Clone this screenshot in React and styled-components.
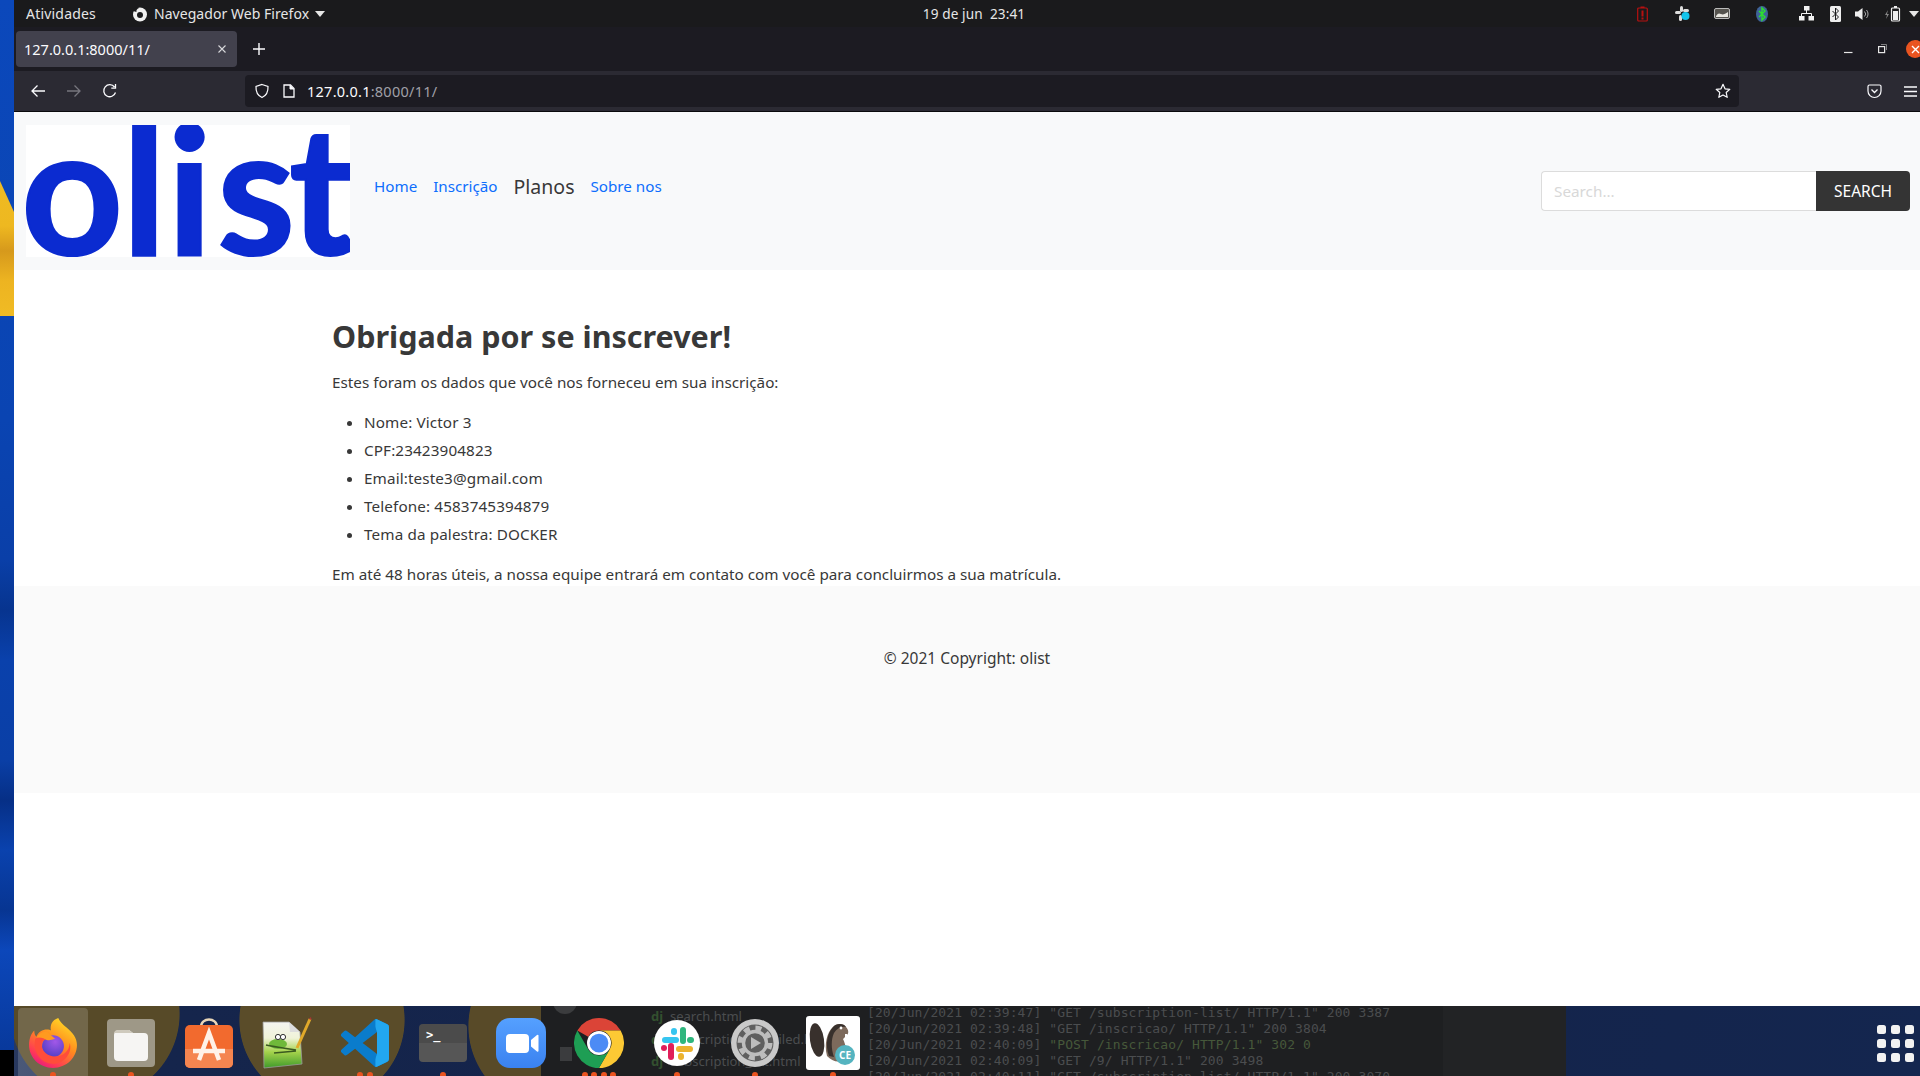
import React from "react";
import styled, { createGlobalStyle } from "styled-components";

const UI = `"Noto Sans", "Open Sans", "Liberation Sans", sans-serif`;

const Global = createGlobalStyle`
  html, body { margin: 0; padding: 0; height: 1076px; overflow: hidden; background: #000; }
  * { box-sizing: border-box; }
  #root { height: 1076px; }
`;

const Desktop = styled.div`
  display: flex; width: 1920px; height: 1076px; overflow: hidden; background: #000;
  font-family: ${UI};
`;
const Wallpaper = styled.div`
  width: 14px; height: 1050px; flex: none;
  background: linear-gradient(to bottom, #0b48bb 0, #0a44b2 420px, #0a3fa8 560px, #07348f 610px, #0a41ac 660px, #0a3fa6 760px, #062f86 800px, #0a42ae 850px, #073592 910px, #0c47ba 950px, #08399c 1050px);
`;
const WallpaperGold = styled.div`
  width: 14px; height: 135px; margin-top: 181px;
  clip-path: polygon(0 0, 100% 31px, 100% 100%, 0 100%);
  background: linear-gradient(to bottom, #efbb22 0, #eeb820 45px, #d6991c 70px, #edb421 100px, #f0bb24 135px);
`;
const Screen = styled.div`
  flex: 1; min-width: 0; display: flex; flex-direction: column; height: 1076px;
`;

/* top system bar */
const TopBar = styled.div`
  height: 27px; flex: none; background: #1a1a1c; color: #e6e6e6; font-size: 14px;
  display: grid; grid-template-columns: 1fr auto 1fr; align-items: center; padding: 0 0 0 12px;
`;
const TopLeft = styled.div`display: flex; align-items: center;`;
const Activities = styled.span`width: 106px; letter-spacing: .2px;`;
const AppMenu = styled.span`display: flex; align-items: center; gap: 6px; letter-spacing: .05px;`;
const Clock = styled.span`font-size: 13.6px; letter-spacing: .1px; padding-left: 2px;`;
const Tray = styled.div`display: flex; justify-content: flex-end; align-items: center;`;
const TraySlot = styled.span`
  display: flex; justify-content: center; align-items: center; width: ${p => p.$w}px; height: 27px;
`;

/* browser tabs */
const TabStrip = styled.div`
  height: 44px; flex: none; background: #1c1b22; display: flex; align-items: center; padding-left: 2px;
`;
const Tab = styled.div`
  width: 221px; height: 36px; border-radius: 4px; background: #42414d; color: #fbfbfe;
  display: flex; align-items: center; justify-content: space-between; padding: 0 10px 0 8px;
  font-size: 14.5px;
`;
const NewTab = styled.span`display: flex; margin-left: 16px;`;
const WindowButtons = styled.div`
  margin-left: auto; display: flex; align-items: center; gap: 25px; width: 76px; overflow: hidden; height: 24px;
  & > * { flex: none; }
`;
const CloseDot = styled.span`
  width: 18px; height: 18px; border-radius: 50%; background: #e95420; margin-left: -6px;
  display: flex; align-items: center; justify-content: center;
`;

/* browser toolbar */
const Toolbar = styled.div`
  height: 41px; flex: none; background: #2b2a33; border-bottom: 1px solid #0a0a0c;
  display: flex; align-items: flex-start; padding-top: 4px;
`;
const NavButtons = styled.div`
  width: 231px; display: flex; align-items: center; height: 32px; gap: 20px; padding-left: 16px;
`;
const UrlBar = styled.div`
  width: 1494px; height: 32px; background: #1c1b22; border-radius: 4px; flex: none;
  display: flex; align-items: center; padding: 0 8px 0 9px; color: #fbfbfe; font-size: 14.5px; letter-spacing: .25px;
`;
const UrlIcons = styled.span`display: flex; align-items: center; gap: 12px; margin-right: 11px;`;
const UrlHost = styled.span``;
const UrlPath = styled.span`color: #a0a0a8;`;
const UrlStar = styled.span`display: flex; margin-left: auto;`;
const ToolEnd = styled.div`
  flex: 1; display: flex; align-items: center; justify-content: flex-end; height: 32px; gap: 22px; padding-right: 3px;
`;

/* page */
const Page = styled.div`
  flex: 1; min-height: 0; background: #fff; color: #383838; display: flex; flex-direction: column;
  font-family: ${UI}; font-size: 16px; line-height: 24px;
`;
const Navbar = styled.nav`
  height: 158px; flex: none; background: #f8f9fa; display: flex; align-items: flex-start; padding: 13px 10px 13px 12px;
`;
const Logo = styled.svg`display: block; width: 324px; height: 132px; flex: none;`;
const LogoText = styled.text`
  font-family: "Lato", "Open Sans", sans-serif; font-weight: 700; fill: #0b2bd0;
  stroke: #0b2bd0; stroke-width: 2px;
`;
const NavLinks = styled.ul`
  list-style: none; display: flex; align-items: center; margin: 48.5px 0 0 16px; padding: 0;
`;
const NavItem = styled.li`
  padding: 0 8px; white-space: nowrap;
  color: ${p => (p.$current ? "#383838" : "#0d6efd")};
  font-size: ${p => (p.$current ? "19.5px" : "15.2px")};
  position: relative; top: ${p => (p.$current ? "1px" : "0")};
`;
const SearchForm = styled.form`display: flex; margin: 46px 0 0 auto; height: 40px;`;
const SearchInput = styled.input`
  width: 275px; height: 40px; border: 1px solid #dcdcdc; border-right: 0; border-radius: 4px 0 0 4px;
  background: #fff; padding: 0 12px; font: 15.3px ${UI}; outline: none;
  &::placeholder { color: #d8d8d8; opacity: 1; }
`;
const SearchButton = styled.button`
  width: 94px; height: 40px; border: 0; border-radius: 0 4px 4px 0; background: #343434; color: #fff;
  font: 15.5px ${UI}; padding: 0;
`;
const Content = styled.main`padding: 47px 0 0 318px; font-size: 15.25px;`;
const Title = styled.h1`
  font-size: 30.5px; line-height: 38px; font-weight: 700; color: #383838; margin: 0 0 15px;
`;
const Para = styled.p`margin: 14px 0;`;
const Details = styled.ul`margin: 0; padding-left: 32px; list-style: disc;`;
const Detail = styled.li`line-height: 28px; letter-spacing: .12px;`;
const Footer = styled.footer`
  height: 207px; flex: none; background: #fafafa; margin-top: -14px; text-align: center;
  padding-top: 60px; font-size: 15.5px;
`;

/* dock */
const Dock = styled.div`
  position: relative; height: 70px; flex: none; overflow: hidden; display: flex;
  background:
    linear-gradient(to right, transparent 527px, #1e1f21 527px, #1e1f21 1429px, #222325 1429px, #222325 1552px, transparent 1552px),
    radial-gradient(circle 85px at 81px 8px, #574a28 99%, transparent 100%),
    radial-gradient(circle 83px at 308px 14px, #5a4c29 99%, transparent 100%),
    radial-gradient(circle 85px at 539px 20px, #584a28 99%, transparent 100%),
    linear-gradient(100deg, #2a3a60 0, #15254c 8%, #142349 60%, #14264f 100%);
`;
const Behind = styled.div`position: absolute; inset: 0; pointer-events: none;`;
const LogLines = styled.pre`
  position: absolute; left: 853px; top: -1px; margin: 0;
  font: 13px/16px "DejaVu Sans Mono", monospace; letter-spacing: .1px; color: #4b4d4f;
`;
const LogLine = styled.div``;
const PostSpan = styled.span`color: #46583a;`;
const FileList = styled.div`
  position: absolute; left: 637px; top: -1px; font: 13px/22.5px ${UI}; color: #4b4d4f; white-space: nowrap;
`;
const FileRow = styled.div`display: flex; gap: 6px;`;
const Dj = styled.span`color: #33502f; font-weight: 700; width: 13px;`;
const GhostCircle = styled.span`
  position: absolute; left: 539px; top: -16px; width: 24px; height: 24px; border-radius: 50%; background: #3b3c3e;
`;
const GhostIcon = styled.span`
  position: absolute; left: 546px; top: 41px; width: 12px; height: 14px; background: #3b3c3e;
`;
const Launcher = styled.div`position: relative; display: flex;`;
const Cell = styled.div`
  width: 78px; height: 70px; display: flex; flex-direction: column; align-items: center; position: relative;
`;
const Slot = styled.div`
  width: 70px; height: 68px; margin-top: 2px; padding-top: 2px; display: flex; align-items: center; justify-content: center;
  border-radius: 4px 4px 0 0;
  background: ${p => (p.$active ? "rgba(255,255,255,.16)" : "transparent")};
`;
const Pips = styled.div`position: absolute; bottom: -2px; display: flex; gap: 3.5px;`;
const Pip = styled.span`width: 6px; height: 6px; border-radius: 50%; background: #e95420;`;
const AppGrid = styled.div`
  position: absolute; right: 6px; top: 19px; display: grid; grid-template-columns: repeat(3, 9px); gap: 5px 5px;
`;
const AppDot = styled.span`width: 9px; height: 9px; border-radius: 2.5px; background: #f2f2f2;`;
const TerminalTile = styled.div`
  width: 48px; height: 38px; border-radius: 4px; overflow: hidden;
  background: linear-gradient(to bottom, #4b4b4b 0, #4b4b4b 50%, #565656 50%, #565656 100%);
  color: #fff; font: 700 12px/14px "DejaVu Sans Mono", monospace; padding: 4px 0 0 7px;
`;
const BeaverTile = styled.div`
  width: 54px; height: 54px; border-radius: 3px; background: #fff; position: relative;
`;
const CeBadge = styled.span`
  position: absolute; right: 5px; bottom: 5px; width: 20px; height: 20px; border-radius: 50%;
  background: #55b4c0; color: #fff; font: 700 10px/20px ${UI}; text-align: center;
`;

const Svg = ({ s = 16, w, h, vb, children }) => (
  <svg width={w || s} height={h || s} viewBox={vb || `0 0 ${w || s} ${h || s}`} fill="none" style={{ display: "block" }}>
    {children}
  </svg>
);
const Caret = () => <Svg w={10} h={6}><path d="M0 0h10L5 6z" fill="#e6e6e6" /></Svg>;
const FoxMono = () => (
  <Svg s={16}>
    <circle cx="8" cy="8.500" r="7" fill="#f0f0f0" />
    <circle cx="8" cy="9" r="3" fill="#1a1a1c" />
    <path d="M1 5C3 1 6 .5 7 2 5 3 4 4 4.500 6z" fill="#1a1a1c" />
  </Svg>
);

const TrayIcons = () => (
  <Tray>
    <TraySlot $w={28}>
      <Svg w={11} h={16}><rect x=".7" y="2" width="9.6" height="13" rx="1" stroke="#b81010" strokeWidth="1.2" /><rect x="3.5" y=".5" width="4" height="1.5" fill="#b81010" /><rect x="4.5" y="4.5" width="2" height="6" fill="#b81010" /><rect x="4.5" y="11.5" width="2" height="2" fill="#b81010" /></Svg>
    </TraySlot>
    <TraySlot $w={52}>
      <Svg s={15}><rect x="5" y="0" width="3" height="6" rx="1.5" fill="#ddd" /><rect x="0" y="5" width="6" height="3" rx="1.5" fill="#ddd" /><rect x="8" y="3" width="6" height="3" rx="1.5" fill="#ddd" /><rect x="4" y="9" width="3" height="6" rx="1.5" fill="#ddd" /><circle cx="10.5" cy="10" r="4" fill="#12c4ec" /></Svg>
    </TraySlot>
    <TraySlot $w={28}>
      <Svg w={16} h={11}><rect x=".5" y=".5" width="15" height="10" rx="1.5" fill="#55534e" stroke="#bbb" /><path d="M2 8c2-3 3-3 5-2s4 0 7-2v5H2z" fill="#e8e6e0" /></Svg>
    </TraySlot>
    <TraySlot $w={52}>
      <Svg w={12} h={16}><ellipse cx="6" cy="8" rx="6" ry="8" fill="#3f6398" /><path d="M3 5l6 6-3 3V2l3 3-6 6" stroke="#2de02d" strokeWidth="1.4" /></Svg>
    </TraySlot>
    <TraySlot $w={36}>
      <Svg s={15}><rect x="5" y="0" width="5.5" height="4.5" fill="#f2f2f2" /><rect x="0" y="10" width="5.5" height="4.5" fill="#f2f2f2" /><rect x="9.5" y="10" width="5.5" height="4.5" fill="#f2f2f2" /><path d="M7.500 4v3.500M2.500 10V7.500h10V10" stroke="#f2f2f2" /></Svg>
    </TraySlot>
    <TraySlot $w={22}>
      <Svg w={11} h={16}><rect width="11" height="16" rx="1.5" fill="#eee" /><path d="M2.500 5l6 6-3 3V2l3 3-6 6" stroke="#1a1a1c" strokeWidth="1" /></Svg>
    </TraySlot>
    <TraySlot $w={32}>
      <Svg w={15} h={14}><path d="M0 4.500h3L7.500 1v12L3 9.500H0z" fill="#eee" /><path d="M9.500 4.500a3.500 3.500 0 0 1 0 5M11.500 3a6 6 0 0 1 0 8" stroke="#aaa" strokeWidth="1" /></Svg>
    </TraySlot>
    <TraySlot $w={30}>
      <Svg w={16} h={16}><path d="M3 4L0 9h2l-1 4 3-5H2z" fill="#888" /><rect x="6.500" y="2" width="8" height="13" rx="1" stroke="#eee" strokeWidth="1.2" /><rect x="9" y="0" width="3" height="2" fill="#eee" /><rect x="8" y="5" width="5" height="9" fill="#eee" /></Svg>
    </TraySlot>
    <TraySlot $w={12}><Caret /></TraySlot>
  </Tray>
);

const FirefoxIcon = () => (
  <Svg s={50} vb="0 0 48 48">
    <defs>
      <linearGradient id="ffa" x1="0.8" y1="0" x2="0.2" y2="1"><stop offset="0" stopColor="#ffe226" /><stop offset=".45" stopColor="#ff8a1f" /><stop offset=".8" stopColor="#ff3a55" /><stop offset="1" stopColor="#e31587" /></linearGradient>
      <radialGradient id="ffb" cx=".6" cy=".3" r=".8"><stop offset="0" stopColor="#a258e8" /><stop offset="1" stopColor="#4a3cc0" /></radialGradient>
    </defs>
    <path d="M29 0c2 4 4 6 8 9 6 5 10 10 10 17 0 12-10 22-23 22C11 48 1 38 1 26c0-6 2-11 5-14 0 3 1 5 2 6 2-5 6-7 10-7 2 0 3 0 4 1-1-5 1-10 7-12z" fill="url(#ffa)" />
    <circle cx="24" cy="27" r="10.5" fill="url(#ffb)" />
    <path d="M7 20c5-3 9-2 12 0-4 1-6 3-6 6 0 6 6 11 13 11 8 0 14-6 14-13 3 9-5 20-16 20C13 44 4 33 7 20z" fill="#ff4d3a" />
    <path d="M8 19c3-5 8-7 11-5l7 6c-3 1-6 2-8 1s-6-3-10-2z" fill="#ff9a1f" />
  </Svg>
);
const FilesIcon = () => (
  <Svg s={48}>
    <rect width="48" height="48" rx="4" fill="#9e9887" />
    <path d="M7 16a5 5 0 0 1 5-5h10l4 3h11a4 4 0 0 1 4 4v20a4 4 0 0 1-4 4H11a4 4 0 0 1-4-4z" fill="#f6f5f3" />
    <path d="M7 14a4 4 0 0 1 4-3h11l4 3z" fill="#cfcabd" />
  </Svg>
);
const SoftwareIcon = () => (
  <Svg w={48} h={50}>
    <path d="M16 9c0-10 16-10 16 0" stroke="#e9d6b8" strokeWidth="2.4" />
    <rect y="7" width="48" height="43" rx="5" fill="#f26a2e" />
    <path d="M0 31h48v14a5 5 0 0 1-5 5H5a5 5 0 0 1-5-5z" fill="#f58550" />
    <path d="M14 42L24 15l10 27M8 33h32" stroke="#fff2e8" strokeWidth="4.5" />
  </Svg>
);
const NotepadIcon = () => (
  <Svg w={50} h={52}>
    <defs><linearGradient id="npp" x1="0" y1="0" x2="0" y2="1"><stop offset="0" stopColor="#f4f4f0" /><stop offset=".35" stopColor="#f0f3d8" /><stop offset=".65" stopColor="#a5d34c" /><stop offset="1" stopColor="#3f9a2a" /></linearGradient></defs>
    <path d="M1 5h26l11 10 2 32-38 4z" fill="url(#npp)" stroke="#9a9a9a" strokeWidth=".8" />
    <path d="M27 5l1 10h10z" fill="#ddd" />
    <ellipse cx="16" cy="27" rx="9" ry="5" fill="#6fb93a" />
    <circle cx="16" cy="20" r="2.6" fill="#fff" stroke="#333" /><circle cx="21" cy="20" r="2.6" fill="#fff" stroke="#333" />
    <path d="M4 28c8 2 14 2 30 5M12 36l22-2" stroke="#3a5a20" strokeWidth="1.4" />
    <path d="M35 31L48 2" stroke="#e0a92a" strokeWidth="3" />
    <path d="M46.500 2L49 0l.5 3z" fill="#a33" />
  </Svg>
);
const VsCodeIcon = () => (
  <Svg s={48} vb="0 0 24 24">
    <defs><clipPath id="vsr"><rect x="17.2" y="0" width="7" height="24" /></clipPath></defs>
    <path d="M23.15 2.587L18.21.21a1.494 1.494 0 0 0-1.705.29l-9.46 8.63-4.12-3.128a.999.999 0 0 0-1.276.057L.327 7.261A1 1 0 0 0 .326 8.74L3.899 12 .326 15.26a1 1 0 0 0 .001 1.479L1.65 17.94a.999.999 0 0 0 1.276.057l4.12-3.128 9.46 8.63a1.492 1.492 0 0 0 1.704.29l4.942-2.377A1.5 1.5 0 0 0 24 20.06V3.939a1.5 1.5 0 0 0-.85-1.352zm-5.146 14.861L10.826 12l7.178-5.448v10.896z" fill="#0a7ccc" />
    <path d="M23.15 2.587L18.21.21a1.494 1.494 0 0 0-1.705.29L16 1 18 6.500v11L16 23l.5.5a1.492 1.492 0 0 0 1.704.29l4.942-2.377A1.500 1.500 0 0 0 24 20.06V3.939a1.500 1.500 0 0 0-.85-1.352z" fill="#22a7f0" clipPath="url(#vsr)" />
  </Svg>
);
const ZoomIcon = () => (
  <Svg s={50}>
    <defs><linearGradient id="zm" x1="0" y1="0" x2="0" y2="1"><stop offset="0" stopColor="#55a0ff" /><stop offset="1" stopColor="#3a82f0" /></linearGradient></defs>
    <rect width="50" height="50" rx="14" fill="url(#zm)" />
    <rect x="10" y="16" width="23" height="19" rx="4" fill="#fff" />
    <path d="M35 22l6-5a1 1 0 0 1 1.500.8v15a1 1 0 0 1-1.500.8l-6-5z" fill="#fff" />
  </Svg>
);
const ChromeIcon = () => (
  <Svg s={50} vb="0 0 48 48">
    <path d="M24 0A24 24 0 0 1 44.800 12H24A12 12 0 0 0 13.600 18L3.200 12A24 24 0 0 1 24 0Z" fill="#db4437" />
    <path d="M44.800 12A24 24 0 0 1 24 48L34.400 30A12 12 0 0 0 24 12Z" fill="#fcc934" />
    <path d="M3.200 12A24 24 0 0 0 24 48L34.400 30A12 12 0 0 1 13.600 30L3.200 12Z" fill="#1e9e54" />
    <circle cx="24" cy="24" r="11.5" fill="#fff" />
    <circle cx="24" cy="24" r="9" fill="#4c8bf5" />
  </Svg>
);
const SlackIcon = () => (
  <Svg s={46}>
    <circle cx="23" cy="23" r="23" fill="#fff" />
    <rect x="8" y="17" width="17" height="6" rx="3" fill="#36c5f0" /><rect x="17" y="8" width="6" height="7" rx="3" fill="#36c5f0" />
    <rect x="26" y="7" width="6" height="17" rx="3" fill="#2eb67d" /><rect x="33" y="17" width="7" height="6" rx="3" fill="#2eb67d" />
    <rect x="22" y="26" width="17" height="6" rx="3" fill="#ecb22e" /><rect x="24" y="33" width="6" height="7" rx="3" fill="#ecb22e" />
    <rect x="14" y="23" width="6" height="17" rx="3" fill="#e01e5a" /><rect x="7" y="25" width="6" height="6" rx="3" fill="#e01e5a" />
  </Svg>
);
const SettingsIcon = () => (
  <Svg s={48}>
    <circle cx="24" cy="24" r="24" fill="#c9c9c9" />
    <circle cx="24" cy="24" r="18.5" fill="#5f5f5f" />
    <circle cx="24" cy="24" r="15" stroke="#bdbdbd" strokeWidth="5" strokeDasharray="6 5.78" />
    <circle cx="24" cy="24" r="11.5" stroke="#bdbdbd" strokeWidth="3.4" />
    <path d="M20 18l10 6-10 6z" fill="#bdbdbd" />
  </Svg>
);
const BeaverIcon = () => (
  <BeaverTile>
    <Svg s={54}>
      <ellipse cx="11" cy="24" rx="7" ry="17" fill="#38302c" transform="rotate(-8 11 24)" />
      <path d="M21 40C18 28 21 16 27 11c3-4 11-4 13 0 3 3 3 7 0 9l-3 3c3 6 4 13 2 20-6 5-13 2-18-3z" fill="#7d6a5c" />
      <path d="M27 11c3-4 11-4 13 0-4-1-9 1-12 6-3 6-3 16 0 24l-5-1c-4-11-2-22 4-29z" fill="#38302c" />
      <circle cx="35" cy="12" r="1.4" fill="#fff" />
      <rect x="39" y="18" width="2.4" height="4.5" fill="#fff" />
    </Svg>
    <CeBadge>CE</CeBadge>
  </BeaverTile>
);

const apps = [
  { key: "ff", pips: 1, active: true, icon: <FirefoxIcon /> },
  { key: "files", pips: 1, icon: <FilesIcon /> },
  { key: "sw", pips: 0, icon: <SoftwareIcon /> },
  { key: "npp", pips: 0, icon: <NotepadIcon /> },
  { key: "vs", pips: 2, icon: <VsCodeIcon /> },
  { key: "term", pips: 1, icon: <TerminalTile>&gt;_</TerminalTile> },
  { key: "zoom", pips: 0, icon: <ZoomIcon /> },
  { key: "chrome", pips: 4, icon: <ChromeIcon /> },
  { key: "slack", pips: 1, icon: <SlackIcon /> },
  { key: "cfg", pips: 1, icon: <SettingsIcon /> },
  { key: "beaver", pips: 1, icon: <BeaverIcon /> },
];

const logs = [
  ['[20/Jun/2021 02:39:47] "GET /subscription-list/ HTTP/1.1" 200 3387'],
  ['[20/Jun/2021 02:39:48] "GET /inscricao/ HTTP/1.1" 200 3804'],
  ['[20/Jun/2021 02:40:09] ', '"POST /inscricao/ HTTP/1.1" 302 0'],
  ['[20/Jun/2021 02:40:09] "GET /9/ HTTP/1.1" 200 3498'],
  ['[20/Jun/2021 02:40:11] "GET /subscription-list/ HTTP/1.1" 200 3070'],
];

export default function App() {
  return (
    <>
      <Global />
      <Desktop>
        <Wallpaper><WallpaperGold /></Wallpaper>
        <Screen>
          <TopBar>
            <TopLeft>
              <Activities>Atividades</Activities>
              <AppMenu><FoxMono />Navegador Web Firefox <Caret /></AppMenu>
            </TopLeft>
            <Clock>19 de jun&nbsp;&nbsp;23:41</Clock>
            <TrayIcons />
          </TopBar>

          <TabStrip>
            <Tab>
              <span>127.0.0.1:8000/11/</span>
              <Svg s={10}><path d="M1.500 1.500l7 7M8.500 1.500l-7 7" stroke="#d8d8dc" strokeWidth="1.1" /></Svg>
            </Tab>
            <NewTab><Svg s={12}><path d="M6 0v12M0 6h12" stroke="#fbfbfe" strokeWidth="1.4" /></Svg></NewTab>
            <WindowButtons>
              <Svg w={9} h={10}><path d="M0 8.500h8.500" stroke="#e6e6e6" strokeWidth="1.2" /></Svg>
              <Svg w={9} h={10}><rect x=".6" y="2.600" width="6" height="6" stroke="#e6e6e6" strokeWidth="1.2" /><path d="M3 .5h5.500v5.500" stroke="#999" strokeWidth=".8" /></Svg>
              <CloseDot><Svg s={9}><path d="M1 1l7 7M8 1l-7 7" stroke="#fff" strokeWidth="1.4" /></Svg></CloseDot>
            </WindowButtons>
          </TabStrip>

          <Toolbar>
            <NavButtons>
              <Svg s={16}><path d="M15 8H2M7.500 2.500L2 8l5.500 5.500" stroke="#fbfbfe" strokeWidth="1.3" /></Svg>
              <Svg s={16}><path d="M1 8h13M8.500 2.500L14 8l-5.500 5.500" stroke="#77767e" strokeWidth="1.3" /></Svg>
              <Svg s={16}><path d="M13.500 9.500A6 6 0 1 1 12.500 4M13.500 1v4.200H9.300" stroke="#fbfbfe" strokeWidth="1.3" /></Svg>
            </NavButtons>
            <UrlBar>
              <UrlIcons>
                <Svg s={16}><path d="M8 1.500l6 2c.3 5.500-1.500 9-6 11-4.500-2-6.300-5.500-6-11z" stroke="#fbfbfe" strokeWidth="1.2" /></Svg>
                <Svg s={14}><path d="M2 1h6.500L12 4.500V13H2z" stroke="#fbfbfe" strokeWidth="1.3" fill="#1c1b22" /><path d="M8 1v4h4" fill="#fbfbfe" stroke="#fbfbfe" /></Svg>
              </UrlIcons>
              <UrlHost>127.0.0.1</UrlHost><UrlPath>:8000/11/</UrlPath>
              <UrlStar>
                <Svg s={16}><path d="M8 1.300l2 4.500 4.800.5-3.600 3.200 1 4.800L8 11.900l-4.200 2.400 1-4.800L1.200 6.300 6 5.800z" stroke="#fbfbfe" strokeWidth="1.2" strokeLinejoin="round" /></Svg>
              </UrlStar>
            </UrlBar>
            <ToolEnd>
              <Svg s={15}><path d="M1 2.500a1.500 1.500 0 0 1 1.500-1.500h10A1.500 1.500 0 0 1 14 2.500V7a6.500 6.500 0 0 1-13 0z" stroke="#fbfbfe" strokeWidth="1.2" /><path d="M4.500 5.500l3 3 3-3" stroke="#fbfbfe" strokeWidth="1.3" /></Svg>
              <Svg s={13}><path d="M0 2h13M0 6.500h13M0 11h13" stroke="#fbfbfe" strokeWidth="1.3" /></Svg>
            </ToolEnd>
          </Toolbar>

          <Page>
            <Navbar>
              <Logo viewBox="0 0 324 132">
                <rect width="324" height="132" fill="#fff" />
                <LogoText y="130" fontSize="178" x="-5 96 141 191 263">olist</LogoText>
              </Logo>
              <NavLinks>
                <NavItem>Home</NavItem>
                <NavItem>Inscrição</NavItem>
                <NavItem $current>Planos</NavItem>
                <NavItem>Sobre nos</NavItem>
              </NavLinks>
              <SearchForm onSubmit={e => e.preventDefault()}>
                <SearchInput placeholder="Search..." readOnly />
                <SearchButton type="button">SEARCH</SearchButton>
              </SearchForm>
            </Navbar>
            <Content>
              <Title>Obrigada por se inscrever!</Title>
              <Para>Estes foram os dados que você nos forneceu em sua inscrição:</Para>
              <Details>
                <Detail>Nome: Victor 3</Detail>
                <Detail>CPF:23423904823</Detail>
                <Detail>Email:teste3@gmail.com</Detail>
                <Detail>Telefone: 4583745394879</Detail>
                <Detail>Tema da palestra: DOCKER</Detail>
              </Details>
              <Para>Em até 48 horas úteis, a nossa equipe entrará em contato com você para concluirmos a sua matrícula.</Para>
            </Content>
            <Footer>© 2021 Copyright: olist</Footer>
          </Page>

          <Dock>
            <Behind>
              <GhostCircle />
              <GhostIcon />
              <FileList>
                <FileRow><Dj>dj</Dj>search.html</FileRow>
                <FileRow><Dj>dj</Dj>subscription_detailed.html</FileRow>
                <FileRow><Dj>dj</Dj>subscription_list.html</FileRow>
              </FileList>
              <LogLines>
                {logs.map(([a, b], i) => (
                  <LogLine key={i}>{a}{b && <PostSpan>{b}</PostSpan>}</LogLine>
                ))}
              </LogLines>
            </Behind>
            <Launcher>
              {apps.map(a => (
                <Cell key={a.key}>
                  <Slot $active={a.active}>{a.icon}</Slot>
                  <Pips>{Array.from({ length: a.pips }, (_, i) => <Pip key={i} />)}</Pips>
                </Cell>
              ))}
            </Launcher>
            <AppGrid>{Array.from({ length: 9 }, (_, i) => <AppDot key={i} />)}</AppGrid>
          </Dock>
        </Screen>
      </Desktop>
    </>
  );
}
